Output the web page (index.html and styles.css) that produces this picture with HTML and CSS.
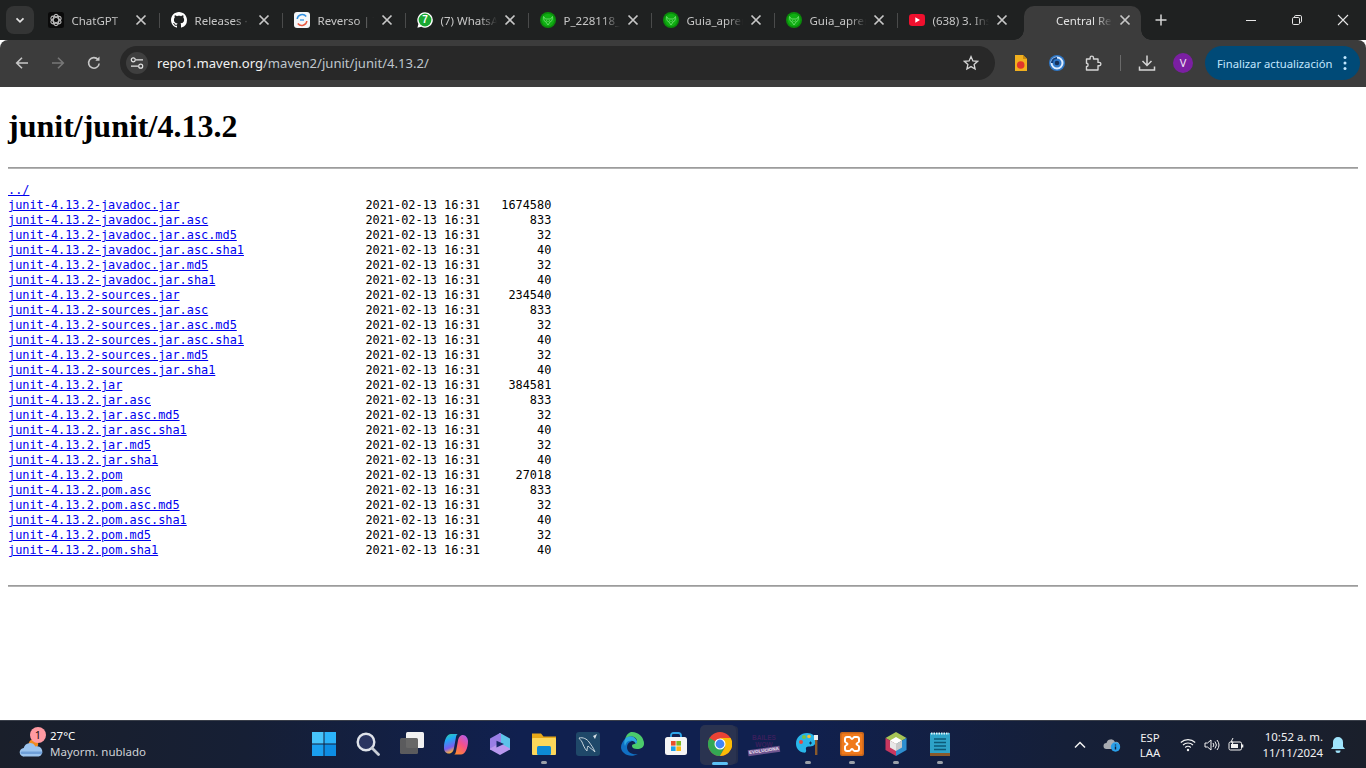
FILE: index.html
```html
<!DOCTYPE html>
<html lang="es">
<head>
<meta charset="utf-8">
<title>Central Repository: junit/junit/4.13.2</title>
<link rel="stylesheet" href="styles.css">
</head>
<body>
<svg class="defs" aria-hidden="true">
  <defs>
    <linearGradient id="copL" x1="0" y1="0" x2="0.300" y2="1"><stop offset="0" stop-color="#36d39a"/><stop offset=".35" stop-color="#1fa8f5"/><stop offset=".75" stop-color="#7a5cf0"/><stop offset="1" stop-color="#f6b03c"/></linearGradient>
    <linearGradient id="copR" x1="0.800" y1="0" x2="0.200" y2="1"><stop offset="0" stop-color="#b45ce6"/><stop offset=".45" stop-color="#f4508a"/><stop offset="1" stop-color="#ff8a2e"/></linearGradient>
  </defs>
  <symbol id="x" viewBox="0 0 16 16"><path d="M3.500 3.500l9 9M12.500 3.500l-9 9" fill="none" stroke="#c7c7c7" stroke-width="1.700"/></symbol>
  <symbol id="razer" viewBox="0 0 16 16">
    <circle cx="8" cy="8" r="8" fill="#0b8c0b"/><circle cx="8" cy="8" r="6.300" fill="#0fae12"/>
    <path d="M3.500 4.500l2 2.500h5l2-2.500-.5 4-2 1.500-2 3-2-3-2-1.500zM6 8.500l1.500 1M10 8.500l-1.500 1" fill="none" stroke="#6fdc6f" stroke-width=".9"/>
  </symbol>
</svg>

<header class="chrome">
  <div class="tabstrip">
    <button class="tabsearch" aria-label="Buscar pestañas"><svg class="ico10" viewBox="0 0 10 10"><path d="M1.500 3.300L5 6.800l3.500-3.500" fill="none" stroke="#e3e3e3" stroke-width="1.700"/></svg></button>
    <div class="tabs">
      <div class="tab">
        <svg class="fav" viewBox="0 0 16 16"><rect width="16" height="16" rx="2.500" fill="#0a0a0a"/><g fill="none" stroke="#b9b9b9" stroke-width="1.100"><ellipse cx="8" cy="8" rx="2.700" ry="5.600"/><ellipse cx="8" cy="8" rx="2.700" ry="5.600" transform="rotate(60 8 8)"/><ellipse cx="8" cy="8" rx="2.700" ry="5.600" transform="rotate(120 8 8)"/></g></svg>
        <span class="title">ChatGPT</span><svg class="close"><use href="#x"/></svg>
      </div>
      <div class="tab">
        <svg class="fav" viewBox="0 0 16 16"><path fill="#fff" d="M8 0C3.580 0 0 3.580 0 8c0 3.540 2.290 6.530 5.470 7.590.4.070.55-.17.55-.38 0-.19-.01-.82-.01-1.490-2.010.37-2.530-.49-2.690-.94-.09-.23-.48-.94-.82-1.130-.28-.15-.68-.52-.01-.53.63-.01 1.080.58 1.230.82.72 1.210 1.870.87 2.330.66.07-.52.28-.87.51-1.070-1.780-.2-3.640-.89-3.640-3.950 0-.87.31-1.590.82-2.150-.08-.2-.36-1.020.08-2.120 0 0 .67-.21 2.200.82.64-.18 1.320-.27 2-.27.68 0 1.360.09 2 .27 1.530-1.040 2.200-.82 2.200-.82.44 1.100.16 1.920.08 2.120.51.56.82 1.270.82 2.150 0 3.070-1.870 3.750-3.650 3.950.29.25.54.73.54 1.480 0 1.070-.01 1.930-.01 2.200 0 .21.15.46.55.38A8.013 8.013 0 0 0 16 8c0-4.420-3.580-8-8-8z"/></svg>
        <span class="title">Releases · junit</span><svg class="close"><use href="#x"/></svg>
      </div>
      <div class="tab">
        <svg class="fav" viewBox="0 0 16 16"><rect width="16" height="16" rx="3" fill="#f4f6f8"/><path d="M3.200 7a5 5 0 0 1 9-2.500" fill="none" stroke="#2f8fe0" stroke-width="1.500"/><path d="M12.800 9a5 5 0 0 1-9 2.500" fill="none" stroke="#e8583f" stroke-width="1.500"/><rect x="6" y="7.200" width="4" height="1.600" fill="#5aa9e8"/></svg>
        <span class="title">Reverso | Trad</span><svg class="close"><use href="#x"/></svg>
      </div>
      <div class="tab">
        <svg class="fav" viewBox="0 0 16 16"><path d="M8 .3a7.700 7.700 0 0 0-6.600 11.600L.4 15.700l3.900-1A7.700 7.700 0 1 0 8 .3z" fill="#fff"/><circle cx="8" cy="8" r="6.400" fill="#1aa732"/><text class="favnum" x="8" y="11.300" text-anchor="middle">7</text></svg>
        <span class="title">(7) WhatsApp</span><svg class="close"><use href="#x"/></svg>
      </div>
      <div class="tab">
        <svg class="fav"><use href="#razer"/></svg>
        <span class="title">P_228118_guia</span><svg class="close"><use href="#x"/></svg>
      </div>
      <div class="tab">
        <svg class="fav"><use href="#razer"/></svg>
        <span class="title">Guia_aprendizaje</span><svg class="close"><use href="#x"/></svg>
      </div>
      <div class="tab">
        <svg class="fav"><use href="#razer"/></svg>
        <span class="title">Guia_aprendizaje</span><svg class="close"><use href="#x"/></svg>
      </div>
      <div class="tab tab-nosep">
        <svg class="fav" viewBox="0 0 16 16"><rect y="2" width="16" height="12" rx="3.200" fill="#f0102e"/><path d="M6.300 5.300L11 8l-4.700 2.700z" fill="#fff"/></svg>
        <span class="title">(638) 3. Instalar</span><svg class="close"><use href="#x"/></svg>
      </div>
      <div class="tab tab-active">
        <span class="title">Central Repository</span><svg class="close"><use href="#x"/></svg>
      </div>
    </div>
    <svg class="newtab" viewBox="0 0 12 12"><path d="M6 .5v11M.5 6h11" stroke="#d5d5d5" stroke-width="1.500"/></svg>
    <div class="winctl">
      <svg class="ico12" viewBox="0 0 12 12"><path d="M1 6.500h10" stroke="#e6e6e6" stroke-width="1"/></svg>
      <svg class="ico12" viewBox="0 0 12 12"><rect x="1.500" y="3.500" width="7" height="7" rx="1.200" fill="none" stroke="#e6e6e6"/><path d="M3.500 3.300V2.800a1.300 1.300 0 0 1 1.300-1.300h4.400a1.300 1.300 0 0 1 1.300 1.300v4.400a1.300 1.300 0 0 1-1.300 1.300" fill="none" stroke="#e6e6e6"/></svg>
      <svg class="ico12" viewBox="0 0 12 12"><path d="M1 1l10 10M11 1L1 11" stroke="#e6e6e6" stroke-width="1.100"/></svg>
    </div>
  </div>

  <div class="toolbar">
    <div class="navs">
      <svg class="navico" viewBox="0 0 16 16"><path d="M14 8H3M8 2.700L2.700 8 8 13.300" fill="none" stroke="#c7c7c7" stroke-width="1.600"/></svg>
      <svg class="navico" viewBox="0 0 16 16"><path d="M2 8h11M8 2.700L13.300 8 8 13.300" fill="none" stroke="#777" stroke-width="1.600"/></svg>
      <svg class="navico" viewBox="0 0 16 16"><path d="M13.200 8.500A5.300 5.300 0 1 1 12 4.500" fill="none" stroke="#c7c7c7" stroke-width="1.600"/><path d="M13.500 1.500v4.200H9.300z" fill="#c7c7c7"/></svg>
    </div>
    <div class="omnibox">
      <span class="sitebtn"><svg class="ico14" viewBox="0 0 14 14"><g fill="none" stroke="#e3e3e3" stroke-width="1.200"><path d="M6 3.800h7M1 10.200h7"/><circle cx="3.300" cy="3.800" r="2"/><circle cx="10.700" cy="10.200" r="2"/></g></svg></span>
      <span class="url"><span class="host">repo1.maven.org</span>/maven2/junit/junit/4.13.2/</span>
      <svg class="star" viewBox="0 0 16 16"><path d="M8 1.600l1.900 4.300 4.700.4-3.500 3.100 1 4.600L8 11.600 3.900 14l1-4.600L1.400 6.300l4.700-.4z" fill="none" stroke="#d5d5d5" stroke-width="1.300"/></svg>
    </div>
    <div class="actions">
      <svg class="act" viewBox="0 0 18 18"><path d="M3 1h8l4 4v12H3z" fill="#f2b01e"/><path d="M11 1l4 4h-4z" fill="#c98a10"/><circle cx="8.700" cy="11" r="3.800" fill="#e2352b"/></svg>
      <svg class="act" viewBox="0 0 18 18"><circle cx="9" cy="9" r="8" fill="#2f78c8"/><circle cx="9" cy="9" r="5.500" fill="none" stroke="#dcecff" stroke-width="2"/><path d="M4 9a5 5 0 0 1 5-5" fill="none" stroke="#123f7d" stroke-width="2.200"/><circle cx="9" cy="9" r="2.300" fill="#17315a"/></svg>
      <svg class="act" viewBox="0 0 18 18"><path d="M2.500 5h3.600V3.800a1.700 1.700 0 0 1 3.400 0V5H14v3.400h1.200a1.700 1.700 0 0 1 0 3.400H14V16H2.500v-3.500a1.600 1.600 0 0 0 0-3.200z" fill="none" stroke="#d5d5d5" stroke-width="1.400" stroke-linejoin="round"/></svg>
      <span class="tsep"></span>
      <svg class="act act-dl" viewBox="0 0 18 18"><path d="M9 1.500v9.500M4.500 7L9 11.500 13.500 7M1.500 12.500v3.500h15v-3.500" fill="none" stroke="#d5d5d5" stroke-width="1.500"/></svg>
      <span class="avatar">V</span>
      <span class="update"><span>Finalizar actualización</span><svg class="dots" viewBox="0 0 4 16"><circle cx="2" cy="2.500" r="1.500"/><circle cx="2" cy="8" r="1.500"/><circle cx="2" cy="13.500" r="1.500"/></svg></span>
    </div>
  </div>
</header>

<main class="page">
  <h1>junit/junit/4.13.2</h1>
  <hr>
  <div class="listing">
    <div class="row"><a href="#">../</a></div>
    <div class="row"><a href="#">junit-4.13.2-javadoc.jar</a><span>2021-02-13 16:31</span><span class="size">1674580</span></div>
    <div class="row"><a href="#">junit-4.13.2-javadoc.jar.asc</a><span>2021-02-13 16:31</span><span class="size">833</span></div>
    <div class="row"><a href="#">junit-4.13.2-javadoc.jar.asc.md5</a><span>2021-02-13 16:31</span><span class="size">32</span></div>
    <div class="row"><a href="#">junit-4.13.2-javadoc.jar.asc.sha1</a><span>2021-02-13 16:31</span><span class="size">40</span></div>
    <div class="row"><a href="#">junit-4.13.2-javadoc.jar.md5</a><span>2021-02-13 16:31</span><span class="size">32</span></div>
    <div class="row"><a href="#">junit-4.13.2-javadoc.jar.sha1</a><span>2021-02-13 16:31</span><span class="size">40</span></div>
    <div class="row"><a href="#">junit-4.13.2-sources.jar</a><span>2021-02-13 16:31</span><span class="size">234540</span></div>
    <div class="row"><a href="#">junit-4.13.2-sources.jar.asc</a><span>2021-02-13 16:31</span><span class="size">833</span></div>
    <div class="row"><a href="#">junit-4.13.2-sources.jar.asc.md5</a><span>2021-02-13 16:31</span><span class="size">32</span></div>
    <div class="row"><a href="#">junit-4.13.2-sources.jar.asc.sha1</a><span>2021-02-13 16:31</span><span class="size">40</span></div>
    <div class="row"><a href="#">junit-4.13.2-sources.jar.md5</a><span>2021-02-13 16:31</span><span class="size">32</span></div>
    <div class="row"><a href="#">junit-4.13.2-sources.jar.sha1</a><span>2021-02-13 16:31</span><span class="size">40</span></div>
    <div class="row"><a href="#">junit-4.13.2.jar</a><span>2021-02-13 16:31</span><span class="size">384581</span></div>
    <div class="row"><a href="#">junit-4.13.2.jar.asc</a><span>2021-02-13 16:31</span><span class="size">833</span></div>
    <div class="row"><a href="#">junit-4.13.2.jar.asc.md5</a><span>2021-02-13 16:31</span><span class="size">32</span></div>
    <div class="row"><a href="#">junit-4.13.2.jar.asc.sha1</a><span>2021-02-13 16:31</span><span class="size">40</span></div>
    <div class="row"><a href="#">junit-4.13.2.jar.md5</a><span>2021-02-13 16:31</span><span class="size">32</span></div>
    <div class="row"><a href="#">junit-4.13.2.jar.sha1</a><span>2021-02-13 16:31</span><span class="size">40</span></div>
    <div class="row"><a href="#">junit-4.13.2.pom</a><span>2021-02-13 16:31</span><span class="size">27018</span></div>
    <div class="row"><a href="#">junit-4.13.2.pom.asc</a><span>2021-02-13 16:31</span><span class="size">833</span></div>
    <div class="row"><a href="#">junit-4.13.2.pom.asc.md5</a><span>2021-02-13 16:31</span><span class="size">32</span></div>
    <div class="row"><a href="#">junit-4.13.2.pom.asc.sha1</a><span>2021-02-13 16:31</span><span class="size">40</span></div>
    <div class="row"><a href="#">junit-4.13.2.pom.md5</a><span>2021-02-13 16:31</span><span class="size">32</span></div>
    <div class="row"><a href="#">junit-4.13.2.pom.sha1</a><span>2021-02-13 16:31</span><span class="size">40</span></div>
  </div>
  <hr>
</main>

<footer class="taskbar">
  <div class="widget">
    <span class="weather">
      <svg class="cloud" viewBox="0 0 26 22"><circle cx="15" cy="8" r="5" fill="#f28a1e"/><path d="M5.500 21a4.500 4.500 0 0 1-.6-9A6.500 6.500 0 0 1 17 10.500a5.300 5.300 0 0 1 3.500 10.500z" fill="#9cc4ee"/><path d="M3 17h20" stroke="#6f9fd8" stroke-width="2.500" stroke-linecap="round"/></svg>
      <span class="badge">1</span>
    </span>
    <span class="wtext"><span class="temp">27°C</span><span class="cond">Mayorm. nublado</span></span>
  </div>

  <div class="apps">
    <span class="app"><svg class="appico" viewBox="0 0 24 24"><rect width="11.500" height="11.500" fill="#47c4fb"/><rect x="12.500" width="11.500" height="11.500" fill="#2bb3fa"/><rect y="12.500" width="11.500" height="11.500" fill="#1a9fef"/><rect x="12.500" y="12.500" width="11.500" height="11.500" fill="#0d8de3"/></svg></span>
    <span class="app"><svg class="appico" viewBox="0 0 24 24"><circle cx="10" cy="10" r="8.300" fill="#2a3560" stroke="#dfe3ea" stroke-width="2.400"/><path d="M16 16l6.500 6.500" stroke="#c9ced6" stroke-width="2.800" stroke-linecap="round"/></svg></span>
    <span class="app"><svg class="appico" viewBox="0 0 24 24"><rect x="6" y="0" width="18" height="16" rx="1.500" fill="#f1f1f1"/><rect y="6" width="18" height="16" rx="1.500" fill="#5f5f5f" opacity=".95"/></svg></span>
    <span class="app"><svg class="appico" viewBox="0 0 24 24"><path d="M7 2h7c-1 0-1.500 1-2 3l-2 11c-.5 3-2 5.500-5 5.500C1.500 21.500 0 19 0 15.500 0 8 3 2 7 2z" fill="url(#copL)"/><path d="M17 22.500h-7c1 0 1.500-1 2-3l2-11c.5-3 2-5.500 5-5.500 2.500 0 5 3 5 6 0 7.500-3 13.500-7 13.500z" fill="url(#copR)"/></svg></span>
    <span class="app"><svg class="appico" viewBox="0 0 24 24"><g stroke-linejoin="round" stroke-width="2"><path d="M12 12V2l9 5v10z" fill="#5cc3ea" stroke="#5cc3ea"/><path d="M12 12V2L3 7v10z" fill="#9a7fe6" stroke="#9a7fe6"/><path d="M12 12l9 5-9 5-9-5z" fill="#b998ef" stroke="#b998ef"/></g><path d="M8.500 8.800L16 12l-7.500 3.500z" fill="#1b2a6b"/></svg></span>
    <span class="app has-dot"><svg class="appico" viewBox="0 0 24 24"><path d="M0 1.500h9l2.500 3H24V22H0z" fill="#e8a818"/><rect y="6" width="24" height="17" rx="1" fill="#fcd75a"/><rect x="5" y="14" width="14" height="9" rx="1.500" fill="#0d8ad6"/></svg></span>
    <span class="app"><svg class="appico" viewBox="0 0 24 24"><rect width="24" height="24" rx="3" fill="#1f4869"/><path d="M3 6c4-1 8 1 10 4s4 5 6 10c-3-3-5-4-7-6-1 2-1 5-1 5-3-3-4-7-5-9S4 8 3 6z" fill="none" stroke="#c7d4dc" stroke-width="1"/><path d="M17 4l4-2-2 5z" fill="#d7e0e6"/></svg></span>
    <span class="app"><svg class="appico" viewBox="0 0 24 24"><path d="M12 0a12 12 0 0 1 12 12c0 3-3 5-7 5-3 0-5-1-5-3 0-3 5-1 5-5 0-4-7-7-12-2C7 2 9 0 12 0z" fill="#4bcb6b"/><path d="M5 7C1 11-1 17 4 21c3 3 9 4 14 1-5 1-11-1-11-7 0-3 2-5 5-6-2-2-5-3-7-2z" fill="#1170c4"/><path d="M5 7c3-4 10-4 12 2 0 1 0 2-1 3-1-3-4-4-7-3-2 .5-3 2-4 5-1-2-1-5 0-7z" fill="#2ca7e0"/></svg></span>
    <span class="app"><svg class="appico" viewBox="0 0 24 24"><path d="M7 6V3.500A2.500 2.500 0 0 1 9.500 1h5A2.500 2.500 0 0 1 17 3.500V6" fill="none" stroke="#2da5e8" stroke-width="1.800"/><rect x="1" y="5" width="22" height="18" rx="2.500" fill="#f5f5f5"/><rect x="7" y="9" width="4.600" height="4.600" fill="#ea4f2a"/><rect x="12.400" y="9" width="4.600" height="4.600" fill="#7dbb26"/><rect x="7" y="14.400" width="4.600" height="4.600" fill="#1ba1ea"/><rect x="12.400" y="14.400" width="4.600" height="4.600" fill="#fdb813"/></svg></span>
    <span class="app app-active"><svg class="appico" viewBox="0 0 24 24"><circle cx="12" cy="12" r="12" fill="#ea4335"/><path d="M12 12L1.600 6A12 12 0 0 0 12 24l5-9z" fill="#34a853"/><path d="M12 6h10.600A12 12 0 0 1 12 24l5.200-9z" fill="#fbbc05"/><circle cx="12" cy="12" r="5.500" fill="#fff"/><circle cx="12" cy="12" r="4.400" fill="#4285f4"/></svg></span>
    <span class="app"><span class="evo"><span class="evotop">BAILES<br>WOW</span><span class="evolabel">EVOLUCIONA</span></span></span>
    <span class="app has-dot"><svg class="appico" viewBox="0 0 24 24"><path d="M11 1C5 1 0 5.500 0 11.500c0 5 3 8 7 9 3 .7 3.500-1 3-3-.5-2 .5-3 2.500-3 4 0 7.500-1 7.500-6C20 4 16 1 11 1z" fill="#29b6ea"/><circle cx="5" cy="10" r="2" fill="#e8483f"/><circle cx="8" cy="5" r="2" fill="#7cc242"/><circle cx="13" cy="4.500" r="1.800" fill="#fbc02d"/><path d="M13 11h3M14.500 9.500v3" stroke="#12304f" stroke-width="1"/><rect x="18" y="3" width="4" height="5" fill="#eee"/><rect x="19" y="8" width="2.400" height="15" fill="#8a5a2b"/></svg></span>
    <span class="app has-dot"><svg class="appico" viewBox="0 0 24 24"><rect width="24" height="24" rx="2" fill="#c8651a"/><rect x="1.500" y="1.500" width="21" height="21" rx="1.500" fill="#f07a1c"/><path d="M7 5h2.500c1 0 1.500 2 2.500 2s1.500-2 2.500-2H17a2 2 0 0 1 2 2v2.500c0 1-2.500 1.500-2.500 2.500s2.500 1.500 2.500 2.500V17a2 2 0 0 1-2 2h-2.500c-1 0-1.500-2-2.500-2s-1.500 2-2.500 2H7a2 2 0 0 1-2-2v-2.500c0-1 2.500-1.500 2.500-2.500S5 10.500 5 9.500V7a2 2 0 0 1 2-2z" fill="none" stroke="#fff" stroke-width="2"/></svg></span>
    <span class="app has-dot"><svg class="appico" viewBox="0 0 24 24"><path d="M12 0l10.500 6L12 12 1.500 6z" fill="#a6c456"/><path d="M1.500 6L12 12v12L1.500 18z" fill="#c8375f"/><path d="M22.500 6L12 12v12l10.500-6z" fill="#2e8fd0"/><path d="M12 5l6 3.500-6 3.500-6-3.500z" fill="#fff"/><path d="M6 8.500l6 3.500v7l-6-3.500z" fill="#e8e8e8"/><path d="M18 8.500L12 12v7l6-3.500z" fill="#c9c9c9"/></svg></span>
    <span class="app has-dot"><svg class="appico" viewBox="0 0 24 24"><rect x="2" y="1" width="20" height="23" fill="#2ea3c9"/><rect x="2" y="21" width="20" height="3" fill="#8a5a2b"/><path d="M3 1.500h18" stroke="#dff3fa" stroke-width="2" stroke-dasharray="1.500 1"/><path d="M6 7h12M6 10.500h12M6 14h12M6 17.500h12" stroke="#0d5a78" stroke-width="1.600"/></svg></span>
  </div>

  <div class="tray">
    <svg class="chev" viewBox="0 0 12 8"><path d="M1 6.500l5-5 5 5" fill="none" stroke="#f2f2f2" stroke-width="1.500"/></svg>
    <svg class="onedrive" viewBox="0 0 18 14"><path d="M3.500 11a3 3 0 0 1 0-6 4.500 4.500 0 0 1 8.500-1 3.500 3.500 0 0 1 2 7z" fill="#a8acb2"/><circle cx="12.500" cy="9" r="4.700" fill="#2a9fe8"/><path d="M12.500 6.500v.9M12.500 8.500v3" stroke="#10203a" stroke-width="1.400"/></svg>
    <span class="lang"><span>ESP</span><span>LAA</span></span>
    <svg class="sysico" viewBox="0 0 16 14"><g fill="none" stroke="#f2f2f2" stroke-width="1.100"><path d="M.8 4.500a10.400 10.400 0 0 1 14.400 0"/><path d="M3 7a7.200 7.200 0 0 1 10 0"/><path d="M5.200 9.500a4 4 0 0 1 5.600 0"/></g><circle cx="8" cy="12" r="1.200" fill="#f2f2f2"/></svg>
    <svg class="sysico" viewBox="0 0 16 14"><g fill="none" stroke="#f2f2f2" stroke-width="1"><path d="M1 5v4h2.500L7 12V2L3.500 5z"/><path d="M9 5a3 3 0 0 1 0 4M11 3.500a5.500 5.500 0 0 1 0 7M13 2a8 8 0 0 1 0 10"/></g></svg>
    <svg class="sysico" viewBox="0 0 16 14"><rect x="1" y="4" width="12.500" height="8" rx="1.500" fill="none" stroke="#f2f2f2"/><rect x="3" y="6" width="7" height="4" fill="#f2f2f2"/><rect x="14" y="6.500" width="1.300" height="3" fill="#f2f2f2"/><path d="M5 0L3 4h2L4 7.500" fill="none" stroke="#f2f2f2"/></svg>
    <span class="clock"><span>10:52 a. m.</span><span>11/11/2024</span></span>
    <svg class="bell" viewBox="0 0 16 18"><path d="M8 1a5 5 0 0 1 5 5v4.500l2 2.500H1l2-2.500V6a5 5 0 0 1 5-5z" fill="#9fe3fb"/><path d="M5.500 14.500h5a2.500 2.500 0 0 1-5 0z" fill="#9fe3fb"/></svg>
  </div>
</footer>
</body>
</html>
```
FILE: styles.css
```css
* { box-sizing: border-box; }
html, body { height: 100%; }
body {
  margin: 0;
  height: 768px;
  overflow: hidden;
  display: flex;
  flex-direction: column;
  background: #fff;
  color: #000;
  font-family: "Liberation Serif", serif;
}
.defs { width: 0; height: 0; position: absolute; }

/* browser frame */
.chrome { flex: none; height: 87px; font-family: "Noto Sans", sans-serif; }
.tabstrip {
  height: 40px;
  display: flex;
  align-items: flex-start;
  background: #1f2121;
  padding-left: 6px;
}
.tabsearch {
  width: 28px;
  height: 28px;
  margin-top: 6px;
  margin-right: 3px;
  border: 0;
  padding: 0;
  border-radius: 8px;
  background: #343535;
  display: flex;
  align-items: center;
  justify-content: center;
}
.ico10 { width: 10px; height: 10px; }
.tabs { display: flex; height: 40px; }
.tab {
  position: relative;
  width: 123px;
  height: 40px;
  padding: 12px 11px 0 11px;
  display: flex;
  align-items: flex-start;
  color: #c7c7c7;
  font-size: 11.500px;
}
.tab::after {
  content: "";
  position: absolute;
  right: 0;
  top: 13px;
  width: 1px;
  height: 15px;
  background: #4a4b4b;
}
.tab-nosep::after { display: none; }
.fav { width: 16px; height: 16px; flex: none; }
.favnum { font: bold 10px "Liberation Sans", sans-serif; fill: #fff; }
.title {
  flex: 1;
  margin-left: 7.500px;
  margin-right: 5px;
  line-height: 17px;
  white-space: nowrap;
  overflow: hidden;
  -webkit-mask-image: linear-gradient(90deg, #000 70%, transparent 100%);
  mask-image: linear-gradient(90deg, #000 70%, transparent 100%);
}
.close { width: 16px; height: 16px; flex: none; }
.tab-active {
  width: 117px;
  height: 34px;
  margin: 6px 0 0 3px;
  padding: 6px 8px 0 32px;
  background: #3c3c3c;
  border-radius: 10px 10px 0 0;
  color: #e3e3e3;
}
.tab-active .title { margin-left: 0; }
.tab-active::before,
.tab-active::after {
  content: "";
  position: absolute;
  top: auto;
  bottom: 0;
  width: 10px;
  height: 10px;
  background: radial-gradient(circle at 0 0, transparent 9.500px, #3c3c3c 10px);
}
.tab-active::before { left: -10px; }
.tab-active::after {
  right: -10px;
  background: radial-gradient(circle at 100% 0, transparent 9.500px, #3c3c3c 10px);
}
.newtab { width: 12px; height: 12px; margin: 14px 0 0 14px; flex: none; }
.winctl {
  margin-left: auto;
  display: flex;
  gap: 34px;
  padding: 14px 17px 0 0;
}
.ico12 { width: 12px; height: 12px; }

.toolbar {
  height: 47px;
  padding: 6px 0 7px;
  background: #3c3c3c;
  display: flex;
  align-items: center;
  border-radius: 8px 8px 0 0;
}
.navs { display: flex; gap: 20px; padding-left: 14px; width: 120px; }
.navico { width: 16px; height: 16px; flex: none; }
.omnibox {
  width: 875px;
  height: 34px;
  border-radius: 17px;
  background: #282828;
  display: flex;
  align-items: center;
  padding: 0 16px 0 6px;
}
.sitebtn {
  width: 22px;
  height: 22px;
  border-radius: 50%;
  background: #3f3f3f;
  display: flex;
  align-items: center;
  justify-content: center;
  flex: none;
}
.ico14 { width: 14px; height: 14px; }
.url { margin-left: 9px; font-size: 13.100px; color: #bfc6cc; flex: 1; white-space: nowrap; }
.host { color: #f1f1f1; }
.star { width: 16px; height: 16px; flex: none; }
.actions { display: flex; align-items: center; padding-left: 17px; flex: 1; }
.act { width: 18px; height: 18px; flex: none; margin-right: 18px; }
.act-dl { margin-right: 17px; }
.tsep { width: 1px; height: 16px; background: #6a6a6a; margin: 0 17px 0 0; flex: none; }
.avatar {
  width: 20px;
  height: 20px;
  flex: none;
  border-radius: 50%;
  background: #7b1fa2;
  color: #f0e6f5;
  font-size: 11px;
  line-height: 20px;
  text-align: center;
  margin-right: 12px;
}
.update {
  width: 155px;
  height: 34px;
  flex: none;
  border-radius: 17px;
  background: #004a77;
  color: #c2e7ff;
  font-size: 11.250px;
  display: flex;
  align-items: center;
  justify-content: space-between;
  padding: 0 12px;
  white-space: nowrap;
}
.dots { width: 4px; height: 16px; fill: #c2e7ff; flex: none; margin-right: 1px; }

/* page content */
.page {
  flex: 1;
  min-height: 0;
  padding: 0 8px;
  overflow: hidden;
  background: #fff;
}
h1 {
  margin: 21.440px 0 22.600px;
  font-size: 32px;
  font-weight: bold;
  line-height: 36px;
}
hr {
  margin: 8px 0;
  border: 0;
  border-top: 1px solid #9c9c9c;
  border-bottom: 1px solid #b4b4b4;
}
.listing {
  margin: 14.400px 0 12px;
  padding-bottom: 15px;
  font-family: "DejaVu Sans Mono", monospace;
  font-size: 11.890px;
  line-height: 15px;
}
.row { display: grid; grid-template-columns: 50ch 16ch 10ch; white-space: pre; }
.row a { justify-self: start; color: #0000ee; text-decoration: underline; }
.size { text-align: right; }

/* Windows taskbar */
.taskbar {
  flex: none;
  height: 48px;
  display: flex;
  align-items: stretch;
  border-top: 1px solid #3a3f4a;
  background: linear-gradient(90deg, #1a1f2b 0, #161f35 18%, #10204f 38%, #10204f 58%, #151f38 78%, #1a1f2b 100%);
  color: #f2f2f2;
  font-family: "Noto Sans", sans-serif;
}
.widget { width: 302px; flex: none; display: flex; align-items: center; padding-left: 19px; }
.weather { position: relative; width: 31px; height: 26px; flex: none; }
.cloud { width: 25px; height: 22px; position: absolute; left: 0; bottom: 0; }
.badge {
  position: absolute;
  left: 11px;
  top: -5px;
  width: 16px;
  height: 16px;
  border-radius: 50%;
  background: #ff9aa2;
  color: #201010;
  font-size: 11px;
  line-height: 16px;
  text-align: center;
}
.wtext { display: flex; flex-direction: column; font-size: 11.500px; line-height: 16px; margin-top: -1px; }
.temp { color: #fff; }
.cond { color: #cfd2d6; }

.apps { display: flex; width: 660px; flex: none; }
.app {
  position: relative;
  width: 44px;
  display: flex;
  align-items: center;
  justify-content: center;
  padding-bottom: 1px;
}
.appico { width: 24px; height: 24px; }
.has-dot::after {
  content: "";
  position: absolute;
  left: 19px;
  bottom: 4px;
  width: 6px;
  height: 3px;
  border-radius: 2px;
  background: #9aa0a8;
}
.app-active::before {
  content: "";
  position: absolute;
  left: 2px;
  top: 4px;
  width: 36px;
  height: 40px;
  border-radius: 5px;
  background: #2a3350;
  box-shadow: 3px 0 0 -1px #242d4a;
}
.app-active .appico { position: relative; }
.app-active::after {
  content: "";
  position: absolute;
  left: 14px;
  bottom: 3px;
  width: 16px;
  height: 3px;
  border-radius: 2px;
  background: #5cc1f5;
}
.evo { display: flex; flex-direction: column; align-items: center; width: 30px; }
.evotop { font: bold 6.500px/7px "Liberation Sans", sans-serif; color: #3a1f5c; text-align: center; }
.evolabel {
  font: bold 4.500px/6px "Liberation Sans", sans-serif;
  color: #efe6f5;
  background: #6e5590;
  padding: 0 1px;
  transform: rotate(-8deg);
}

.tray { flex: 1; display: flex; align-items: center; padding-left: 112px; font-size: 11.400px; }
.chev { width: 12px; height: 8px; flex: none; margin-right: 17px; }
.onedrive { width: 18px; height: 14px; flex: none; margin-right: 12px; }
.lang { display: flex; flex-direction: column; align-items: center; width: 34px; line-height: 15px; flex: none; margin-right: 13px; }
.sysico { width: 16px; height: 14px; flex: none; margin-right: 8px; }
.clock { display: flex; flex-direction: column; align-items: flex-end; width: 66px; line-height: 16px; flex: none; margin: 0 7px 0 5px; }
.bell { width: 16px; height: 18px; flex: none; }
```
